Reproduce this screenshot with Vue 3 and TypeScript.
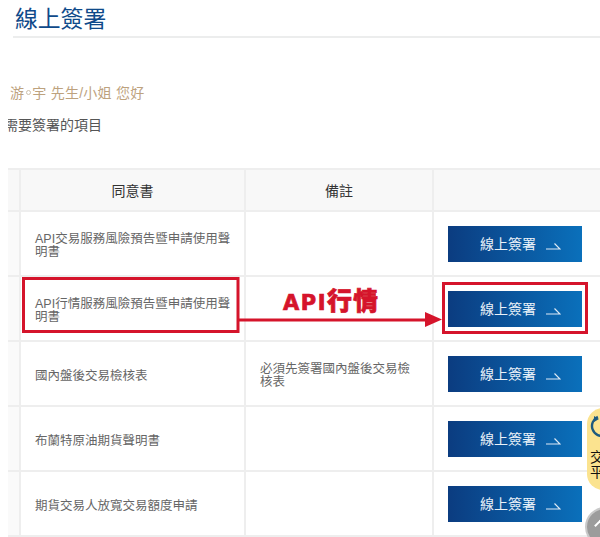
<script setup lang="ts">
interface Row { name: string; note: string }
const rows: Row[] = [
  { name: 'API交易服務風險預告暨申請使用聲明書', note: '' },
  { name: 'API行情服務風險預告暨申請使用聲明書', note: '' },
  { name: '國內盤後交易檢核表', note: '必須先簽署國內盤後交易檢核表' },
  { name: '布蘭特原油期貨聲明書', note: '' },
  { name: '期貨交易人放寬交易額度申請', note: '' },
]
</script>

<template>
  <div class="page">
    <h1 class="title">線上簽署</h1>
    <p class="greet">游<span class="dot"></span>宇 先生/小姐 您好</p>
    <div class="clip"><p class="hint">需要簽署的項目</p></div>
    <div class="clip table-clip">
      <table class="tbl">
        <colgroup>
          <col class="c0" /><col class="c1" /><col class="c2" /><col class="c3" />
        </colgroup>
        <thead>
          <tr><th></th><th>同意書</th><th>備註</th><th></th></tr>
        </thead>
        <tbody>
          <tr v-for="r in rows" :key="r.name">
            <td></td>
            <td class="txt">{{ r.name }}</td>
            <td class="txt note">{{ r.note }}</td>
            <td class="act">
              <button class="sign" type="button">
                <span>線上簽署</span>
                <svg class="arr" width="15" height="8" viewBox="0 0 15 8" fill="none">
                  <path d="M0 7H14L8.5 1.5" stroke="#dfeaf5" stroke-width="1.2" />
                </svg>
              </button>
            </td>
          </tr>
        </tbody>
      </table>
    </div>

    <svg class="mark" width="600" height="537" viewBox="0 0 600 537" fill="none">
      <rect x="23.5" y="278.5" width="214.500" height="53" stroke="#d5142b" stroke-width="3" />
      <rect x="443.500" y="283.500" width="143" height="49" stroke="#d5142b" stroke-width="3" />
      <path d="M239 320H426" stroke="#d5142b" stroke-width="3" />
      <path d="M425 312L442 319.500L425 327Z" fill="#d5142b" />
    </svg>
    <div class="label"><span class="lat">API</span>行情</div>

    <div class="pill">
      <svg class="ring" width="26" height="26" viewBox="0 0 26 26" fill="none">
        <circle cx="13" cy="13" r="10" stroke="#1d5a7e" stroke-width="2.400" stroke-dasharray="46 17" transform="rotate(-20 13 13)" />
        <path d="M5 3L10 6L5 9Z" fill="#1d5a7e" />
      </svg>
      <span class="pill-t">交<br />平</span>
    </div>
    <div class="top"><span class="top-a"></span></div>
  </div>
</template>

<style>
html, body { margin: 0; background: #fff; overflow: hidden; }
</style>

<style scoped>
.page {
  position: relative;
  width: 600px;
  height: 537px;
  overflow: hidden;
  background: #fff;
  font-family: "Liberation Sans", "Noto Sans CJK TC", sans-serif;
  color: #666;
}
.title {
  margin: 0 0 0 13px;
  height: 38px;
  padding: 3px 0 0 2px;
  box-sizing: border-box;
  font-size: 22.800px;
  line-height: 32px;
  font-weight: 400;
  color: #0f4a8a;
  border-bottom: 2px solid #eceded;
}
.greet {
  margin: 45px 0 0 10px;
  height: 20px;
  font-size: 14px;
  line-height: 20px;
  letter-spacing: 0.25px;
  color: #bda27e;
}
.dot {
  display: inline-block;
  box-sizing: border-box;
  width: 5px;
  height: 5px;
  margin: 0 1.500px 3px;
  border: 1px solid #cdbfab;
  border-radius: 50%;
}
.clip { margin-left: 8px; overflow: hidden; }
.hint {
  margin: 12px 0 0 -4px;
  height: 20px;
  font-size: 14px;
  line-height: 20px;
  color: #555;
}
.table-clip { margin-top: 33px; }
.tbl {
  table-layout: fixed;
  border-collapse: collapse;
  width: 592px;
}
.c0 { width: 12px; }
.c1 { width: 225px; }
.c2 { width: 188px; }
.c3 { width: 167px; }
.tbl th, .tbl td {
  border: 2px solid #eeeeee;
  padding: 0;
}
.tbl th:first-child, .tbl td:first-child { border-left: 0; }
.tbl tr th:last-child, .tbl tr td:last-child { border-right: 0; }
.tbl th {
  height: 40px;
  background: #f8f8f8;
  font-size: 14px;
  font-weight: 400;
  color: #333;
}
.tbl td { height: 63px; background: #fff; }
.tbl td:first-child { background: #fafafa; }
.tbl td.txt {
  height: 58px;
  padding: 5px 6px 0 14px;
  font-size: 12.500px;
  line-height: 13px;
  color: #666;
}
.tbl td.note { padding-right: 14px; }
.tbl td.act { padding: 0 0 0 14px; }
.sign {
  display: flex;
  align-items: center;
  justify-content: flex-end;
  gap: 10px;
  width: 134px;
  height: 36px;
  padding: 0 21px 2px 0;
  border: 0;
  background: linear-gradient(90deg, #0b3c80 0%, #0a70bb 100%);
  color: #eaf2f9;
  font: inherit;
  font-size: 14px;
}
.arr { margin-top: 6px; }
.mark {
  position: absolute;
  left: 0;
  top: 0;
  pointer-events: none;
}
.label {
  position: absolute;
  left: 283px;
  top: 286px;
  font-size: 25px;
  line-height: 30px;
  font-weight: 900;
  letter-spacing: 1px;
  color: #d5142b;
  -webkit-text-stroke: 0.7px #d5142b;
  white-space: nowrap;
}
.lat {
  font-family: "DejaVu Sans", sans-serif;
  font-weight: 700;
  font-size: 21px;
  letter-spacing: 1.500px;
}
.pill {
  position: absolute;
  left: 587px;
  top: 408px;
  width: 40px;
  height: 82px;
  border-radius: 16px 0 0 16px;
  background: #fbe38f;
}
.ring { position: absolute; left: 2px; top: 5px; }
.pill-t {
  position: absolute;
  left: 3px;
  top: 42px;
  font-size: 14px;
  line-height: 15px;
  color: #111;
}
.top {
  position: absolute;
  left: 585px;
  top: 507px;
  width: 40px;
  height: 40px;
  border-radius: 50%;
  background: #9c9c9c;
  border: 2px solid #c9c9c9;
  box-sizing: border-box;
}
.top-a {
  position: absolute;
  left: 9px;
  top: 12px;
  width: 7px;
  height: 7px;
  border-left: 2px solid #fff;
  border-top: 2px solid #fff;
  transform: rotate(45deg);
}
</style>
